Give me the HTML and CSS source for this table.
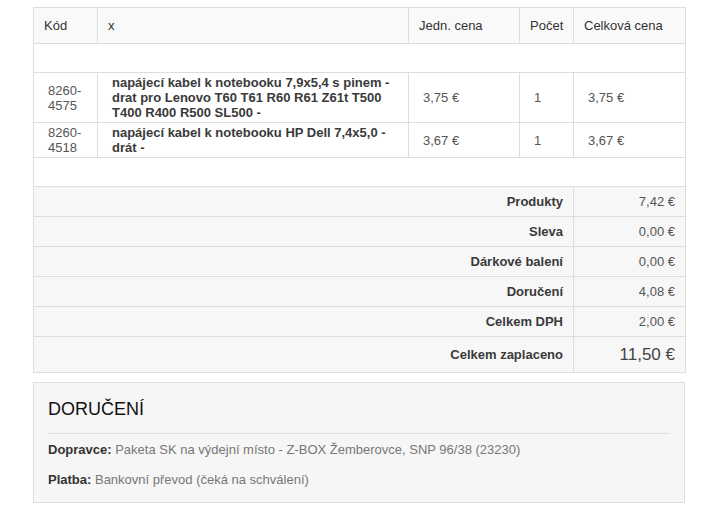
FILE: index.html
```html
<!DOCTYPE html>
<html lang="cs">
<head>
<meta charset="utf-8">
<title>Objednávka</title>
<link rel="stylesheet" href="styles.css">
</head>
<body>
<div class="page">
  <table class="order">
    <colgroup>
      <col class="c-code">
      <col class="c-name">
      <col class="c-price">
      <col class="c-qty">
      <col class="c-total">
    </colgroup>
    <thead>
      <tr>
        <th>Kód</th>
        <th>x</th>
        <th>Jedn. cena</th>
        <th>Počet</th>
        <th>Celková cena</th>
      </tr>
    </thead>
    <tbody>
      <tr class="spacer"><td colspan="5"></td></tr>
      <tr class="item">
        <td class="code">8260-4575</td>
        <td class="name">napájecí kabel k notebooku 7,9x5,4 s pinem - drat pro Lenovo T60 T61 R60 R61 Z61t T500 T400 R400 R500 SL500 -</td>
        <td>3,75&nbsp;€</td>
        <td>1</td>
        <td>3,75&nbsp;€</td>
      </tr>
      <tr class="item">
        <td class="code">8260-4518</td>
        <td class="name">napájecí kabel k notebooku HP Dell 7,4x5,0 - drát -</td>
        <td>3,67&nbsp;€</td>
        <td>1</td>
        <td>3,67&nbsp;€</td>
      </tr>
      <tr class="spacer"><td colspan="5"></td></tr>
    </tbody>
    <tfoot>
      <tr class="sum"><td colspan="4" class="label">Produkty</td><td class="value">7,42&nbsp;€</td></tr>
      <tr class="sum"><td colspan="4" class="label">Sleva</td><td class="value">0,00&nbsp;€</td></tr>
      <tr class="sum"><td colspan="4" class="label">Dárkové balení</td><td class="value">0,00&nbsp;€</td></tr>
      <tr class="sum"><td colspan="4" class="label">Doručení</td><td class="value">4,08&nbsp;€</td></tr>
      <tr class="sum"><td colspan="4" class="label">Celkem DPH</td><td class="value">2,00&nbsp;€</td></tr>
      <tr class="sum grand"><td colspan="4" class="label">Celkem zaplaceno</td><td class="value">11,50&nbsp;€</td></tr>
    </tfoot>
  </table>

  <div class="delivery">
    <h2>DORUČENÍ</h2>
    <hr>
    <p><b>Dopravce:</b> Paketa SK na výdejní místo - Z-BOX Žemberovce, SNP 96/38 (23230)</p>
    <p><b>Platba:</b> Bankovní převod (čeká na schválení)</p>
  </div>
</div>
</body>
</html>
```

FILE: styles.css
```css
html, body {
  margin: 0;
  padding: 0;
  background: #fff;
}

body {
  font-family: "Liberation Sans", Arial, sans-serif;
  font-size: 13px;
  line-height: 15px;
  color: #333;
}

.page {
  width: 652px;
  margin: 7px 0 0 33px;
}

.order {
  width: 652px;
  table-layout: fixed;
  border-collapse: collapse;
  border: 1px solid #ddd;
}

.c-code { width: 64px; }
.c-name { width: 311px; }
.c-price { width: 111px; }
.c-qty { width: 54px; }
.c-total { width: 112px; }

.order th,
.order td {
  border: 1px solid #ddd;
}

.order th {
  background: #f9f9f9;
  font-weight: normal;
  text-align: left;
  padding: 10px 10px;
  color: #333;
}

.spacer td {
  height: 28px;
  padding: 0;
  background: #fff;
}

.item td {
  padding: 2px 10px 2px 14px;
  vertical-align: middle;
  color: #555;
}

.item td.name {
  font-weight: bold;
  color: #3a3a3a;
}

.sum td {
  background: #f7f7f7;
  height: 29px;
  padding: 0 10px;
  text-align: right;
  vertical-align: middle;
}

.sum .label {
  font-weight: bold;
  color: #3a3a3a;
}

.sum .value {
  color: #555;
}

.sum.grand td {
  height: 35px;
}

.sum.grand .value {
  font-size: 17px;
  color: #444;
}

.delivery {
  margin-top: 9px;
  border: 1px solid #ddd;
  background: #f6f6f6;
  padding: 16px 15px 15px 14px;
}

.delivery h2 {
  margin: 0;
  font-size: 18px;
  line-height: 21px;
  font-weight: normal;
  color: #111;
}

.delivery hr {
  margin: 13px 0 8px;
  border: 0;
  border-top: 1px solid #ddd;
  height: 0;
}

.delivery p {
  margin: 0 0 15px;
  color: #777;
}

.delivery p:last-child {
  margin-bottom: 0;
}

.delivery b {
  color: #333;
}
```
